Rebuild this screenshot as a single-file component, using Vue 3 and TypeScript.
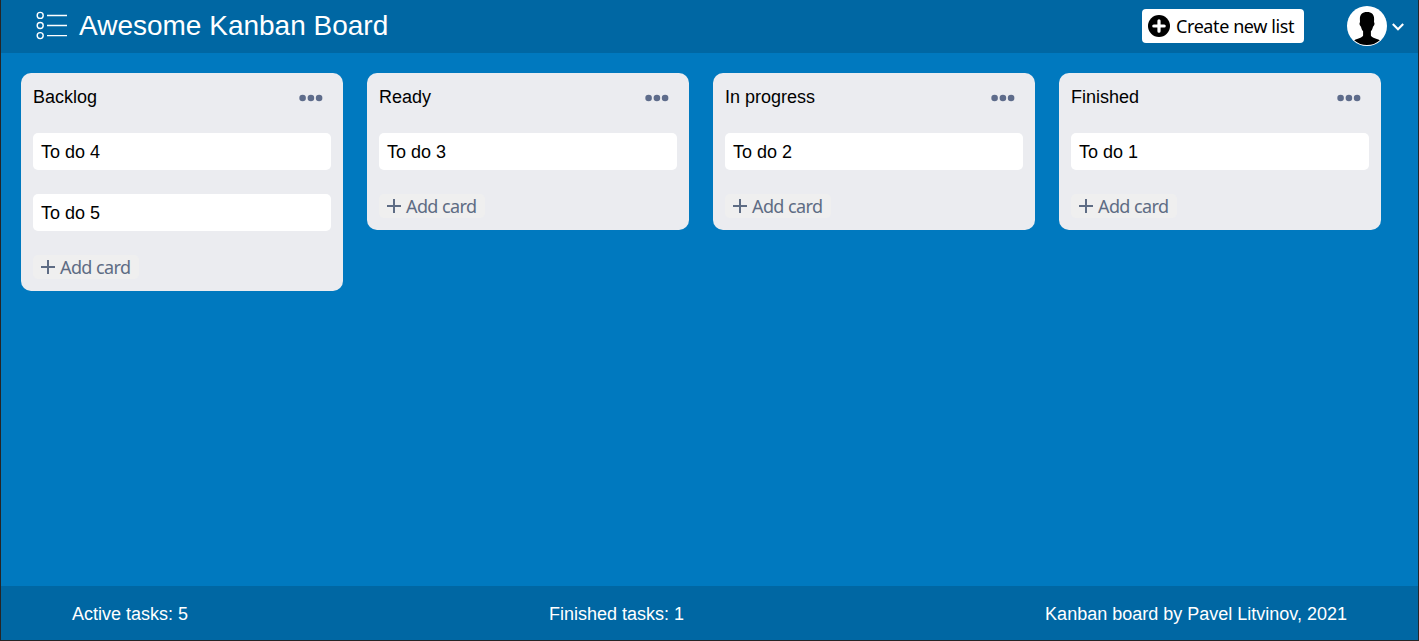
<script setup lang="ts">
import { computed, ref } from 'vue'

interface Task {
  id: number
  name: string
}

interface List {
  title: string
  tasks: Task[]
}

const lists = ref<List[]>([
  { title: 'Backlog', tasks: [{ id: 4, name: 'To do 4' }, { id: 5, name: 'To do 5' }] },
  { title: 'Ready', tasks: [{ id: 3, name: 'To do 3' }] },
  { title: 'In progress', tasks: [{ id: 2, name: 'To do 2' }] },
  { title: 'Finished', tasks: [{ id: 1, name: 'To do 1' }] },
])

const activeCount = ref(5)
const finishedCount = computed(() => lists.value[3].tasks.length)
</script>

<template>
  <div class="app">
    <header class="header">
      <svg class="logo" width="32" height="30" viewBox="0 0 32 30" fill="none" stroke="#fff">
        <g stroke-width="1.4">
          <circle cx="4.2" cy="4.4" r="3" />
          <circle cx="4.2" cy="14.5" r="3" />
          <circle cx="4.2" cy="24.6" r="3" />
        </g>
        <path d="M11 4.5H31M11 14.5H31M11 24.6H31" stroke-width="1.3" />
      </svg>
      <h1 class="title">Awesome Kanban Board</h1>
      <button class="create">
        <svg width="22" height="22" viewBox="0 0 22 22">
          <circle cx="11" cy="11" r="11" />
          <path d="M11 5.8V16.2M5.8 11H16.2" stroke="#fff" stroke-width="3.2" stroke-linecap="round" />
        </svg>
        <span class="create-label">Create new list</span>
      </button>
      <div class="user">
        <svg width="40" height="40" viewBox="0 0 40 40">
          <circle cx="20" cy="20" r="20" fill="#fff" />
          <path
            d="M20 6C24.8 6 27.3 8.8 27.1 13.4L27 16.2C27.7 16.6 27.6 18.2 27.1 19.3C26.8 20 26.4 20.4 26 20.7C25.5 23 24.8 24.4 23.9 25.3V29.4C24.5 31.6 29 32 32.8 34.2A19.3 19.3 0 0 1 7.2 34.2C11 32 15.5 31.6 16.1 29.4V25.3C15.2 24.4 14.5 23 14 20.7C13.6 20.4 13.2 20 12.9 19.3C12.4 18.2 12.3 16.6 13 16.2L12.9 13.4C12.7 8.8 15.2 6 20 6Z"
          />
        </svg>
        <svg class="chevron" width="12" height="8" viewBox="0 0 12 8" fill="none" stroke="#fff" stroke-width="2.1">
          <path d="M0.8 1L6 6.2L11.2 1" />
        </svg>
      </div>
    </header>

    <main class="board">
      <section v-for="list in lists" :key="list.title" class="list">
        <div class="list-head">
          <h2 class="list-title">{{ list.title }}</h2>
          <svg class="dots" width="24" height="8" viewBox="0 0 24 8" fill="#5e6c8b">
            <circle cx="3.6" cy="4" r="3.3" />
            <circle cx="11.9" cy="4" r="3.3" />
            <circle cx="20.1" cy="4" r="3.3" />
          </svg>
        </div>
        <div v-for="task in list.tasks" :key="task.id" class="card">{{ task.name }}</div>
        <button class="add">
          <svg width="14" height="14" viewBox="0 0 14 14" stroke="#5e6c84" stroke-width="2">
            <path d="M7 0V14M0 7H14" />
          </svg>
          <span class="add-label">Add card</span>
        </button>
      </section>
    </main>

    <footer class="footer">
      <span>Active tasks: {{ activeCount }}</span>
      <span class="finished">Finished tasks: {{ finishedCount }}</span>
      <span>Kanban board by Pavel Litvinov, 2021</span>
    </footer>
  </div>
</template>

<style>
body {
  margin: 0;
  overflow: hidden;
}
</style>

<style scoped>
.app {
  box-sizing: border-box;
  height: 641px;
  display: flex;
  flex-direction: column;
  border: 1px solid #252526;
  border-top: 0;
  background: #0079bf;
  font-family: "Liberation Sans", Arial, sans-serif;
  font-size: 18px;
  line-height: 21px;
  color: #000;
}

.header {
  box-sizing: border-box;
  height: 53px;
  flex: none;
  display: flex;
  align-items: center;
  padding: 0 14px 1px 35px;
  background: #0067a3;
}

.logo {
  margin-right: 11px;
  margin-bottom: 1px;
}

.title {
  margin: 0 auto 1px 0;
  font-size: 28px;
  line-height: 32px;
  font-weight: 400;
  color: #fff;
  white-space: nowrap;
}

.create {
  box-sizing: border-box;
  width: 162px;
  height: 34px;
  display: flex;
  align-items: center;
  gap: 6px;
  padding: 0 0 0 6px;
  border: 0;
  border-radius: 4px;
  background: #fff;
  color: #000;
  font: 18px/22px "Noto Sans", sans-serif;
  letter-spacing: -0.41px;
  white-space: nowrap;
}

.user {
  display: flex;
  align-items: center;
  gap: 5px;
  margin-left: 43px;
}

.chevron {
  margin-top: 2px;
}

.board {
  flex: 1;
  display: flex;
  align-items: flex-start;
  gap: 24px;
  padding: 20px;
}

.list {
  box-sizing: border-box;
  width: 322px;
  flex: none;
  display: flex;
  flex-direction: column;
  align-items: stretch;
  gap: 24px;
  padding: 12px;
  border-radius: 10px;
  background: #ebecf0;
}

.list-head {
  height: 24px;
  display: flex;
  align-items: center;
  justify-content: space-between;
  padding-right: 8px;
}

.list-title {
  margin: 0;
  font-size: 18px;
  font-weight: 400;
}

.dots {
  margin-top: 2px;
}

.card {
  box-sizing: border-box;
  height: 37px;
  padding: 9px 8px 7px;
  border-radius: 5px;
  background: #fff;
}

.add {
  width: 106px;
  height: 24px;
  display: flex;
  align-items: center;
  align-self: flex-start;
  gap: 5px;
  padding: 0 0 0 8px;
  border: 0;
  border-radius: 5px;
  background: #efefef;
  color: #5e6c84;
  font: 18px/22px "Noto Sans", sans-serif;
  letter-spacing: -0.6px;
  white-space: nowrap;
}

.footer {
  box-sizing: border-box;
  height: 54px;
  flex: none;
  display: flex;
  align-items: center;
  justify-content: space-between;
  padding: 2px 71px 0;
  background: #0067a3;
  color: #fff;
}
</style>
